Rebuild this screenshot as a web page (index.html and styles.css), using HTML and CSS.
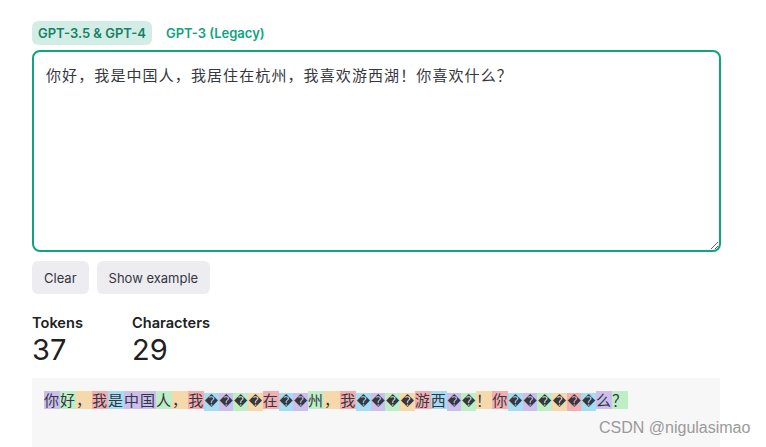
FILE: index.html
```html
<!DOCTYPE html>
<html lang="zh">
<head>
    <meta charset="UTF-8">
    <title>Tokenizer</title>
    <link rel="stylesheet" href="styles.css">
</head>
<body>
    <div class="page">
        <div class="tabs">
            <span class="tab active">GPT-3.5 &amp; GPT-4</span>
            <span class="tab">GPT-3 (Legacy)</span>
        </div>

        <textarea class="input" spellcheck="false">你好，我是中国人，我居住在杭州，我喜欢游西湖！你喜欢什么？</textarea>

        <div class="actions">
            <button class="btn">Clear</button>
            <button class="btn">Show example</button>
        </div>

        <div class="stats">
            <div class="stat">
                <div class="stat-label">Tokens</div>
                <div class="stat-value">37</div>
            </div>
            <div class="stat">
                <div class="stat-label">Characters</div>
                <div class="stat-value">29</div>
            </div>
        </div>

        <!-- token output -->
        <div class="output"><span class="t1">你</span><span class="t2">好</span><span class="t3">，</span><span class="t4">我</span><span class="t5">是</span><span class="t1">中国</span><span class="t2">人</span><span class="t3">，</span><span class="t4">我</span><span class="t5 b">�</span><span class="t1 b">�</span><span class="t2 b">�</span><span class="t3 b">�</span><span class="t4">在</span><span class="t5 b">�</span><span class="t1 b">�</span><span class="t2">州</span><span class="t3">，</span><span class="t4">我</span><span class="t5 b">�</span><span class="t1 b">�</span><span class="t2 b">�</span><span class="t3 b">�</span><span class="t4">游</span><span class="t5">西</span><span class="t1 b">�</span><span class="t2 b">�</span><span class="t3">！</span><span class="t4">你</span><span class="t5 b">�</span><span class="t1 b">�</span><span class="t2 b">�</span><span class="t3 b">�</span><span class="t4 b">�</span><span class="t5 b">�</span><span class="t1">么</span><span class="t2">？</span></div>
    </div>

    <div class="watermark">CSDN @nigulasimao</div>
</body>
</html>
```

FILE: styles.css
```css
body {
    margin: 0;
    background-color: #fff;
    font-family: 'Inter', 'Liberation Sans', sans-serif;
    color: #202123;
    overflow: hidden;
}

.page {
    width: 688px;
    padding: 21px 0 0 32px;
}

/* Model tabs */
.tabs {
    display: flex;
    gap: 8px;
    margin-bottom: 5px;
}

.tab {
    font-size: 13px;
    font-weight: 600;
    color: #10a37f;
    padding: 0 6px;
    height: 24px;
    line-height: 24px;
    border-radius: 6px;
}

.tab.active {
    background-color: #d1ede5;
    color: #1a7f64;
}

/* Input */
.input {
    display: block;
    box-sizing: border-box;
    width: 689px;
    height: 202px;
    margin: 0;
    padding: 12px 12px;
    border: 2px solid #10a37f;
    border-radius: 8px;
    outline: none;
    resize: vertical;
    font-family: 'Noto Sans CJK SC', 'DejaVu Sans Mono', monospace;
    font-size: 15px;
    letter-spacing: 1.1px;
    line-height: 22px;
    color: #353740;
}

.actions {
    display: flex;
    gap: 8px;
    margin-top: 9px;
}

.btn {
    font-family: 'Inter', 'Liberation Sans', sans-serif;
    font-size: 13px;
    color: #353740;
    background-color: #ececf1;
    border: none;
    border-radius: 6px;
    height: 33px;
    padding: 0 12px;
    cursor: pointer;
}

/* Stats */
.stats {
    display: flex;
    margin-top: 20px;
}

.stat {
    width: 100px;
}

.stat-label {
    font-size: 14.6px;
    font-weight: 600;
    line-height: 18px;
}

.stat-value {
    font-size: 29px;
    font-weight: 400;
    line-height: 36px;
}

/* Token output */
.output {
    margin-top: 10px;
    background-color: #f7f7f8;
    height: 43px;
    padding: 13px 12px;
    font-family: 'Noto Sans CJK SC', 'DejaVu Sans Mono', monospace;
    font-size: 15px;
    letter-spacing: 1px;
    line-height: 18px;
    color: #353740;
}

.output span {
    display: inline-block;
    height: 18px;
}

.output .b {
    width: 14.67px;
    letter-spacing: 0;
    text-align: center;
    font-family: 'DejaVu Sans', sans-serif;
    font-size: 13px;
}

.t1 { background-color: rgba(107, 64, 216, 0.3); }
.t2 { background-color: rgba(104, 222, 122, 0.4); }
.t3 { background-color: rgba(244, 172, 54, 0.4); }
.t4 { background-color: rgba(239, 65, 70, 0.4); }
.t5 { background-color: rgba(39, 181, 234, 0.4); }

.watermark {
    position: absolute;
    left: 599px;
    top: 419px;
    font-family: 'Liberation Sans', sans-serif;
    font-size: 16px;
    color: #9a9a9a;
}
```
